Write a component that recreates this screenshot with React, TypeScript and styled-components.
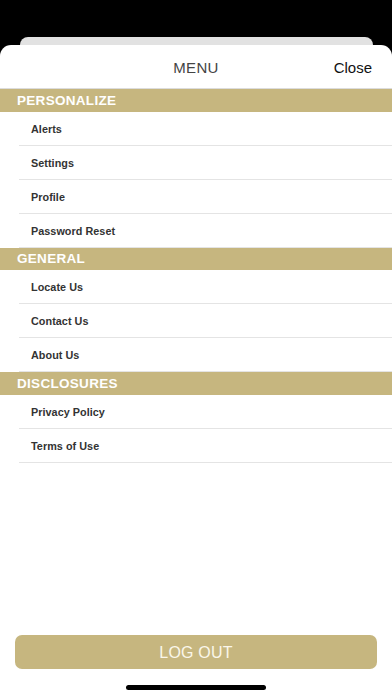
import React from "react";
import styled, { createGlobalStyle } from "styled-components";

const Global = createGlobalStyle`
  html, body { margin: 0; padding: 0; background: #000; }
  body { font-family: "Liberation Sans", Arial, sans-serif; }
  * { box-sizing: border-box; }
`;

const GOLD = "#c6b67f";

const Page = styled.div`
  width: 392px;
  height: 696px;
  background: #000;
  display: flex;
  flex-direction: column;
  padding-top: 37px;
  overflow: hidden;
`;

const BackCard = styled.div`
  height: 8px;
  margin: 0 19px 0 20px;
  background: #e2e2e2;
  border-radius: 9px 9px 0 0;
  flex-shrink: 0;
`;

const Sheet = styled.div`
  flex: 1;
  background: #fff;
  border-radius: 11px 11px 0 0;
  display: flex;
  flex-direction: column;
`;

const Header = styled.div`
  height: 44px;
  display: grid;
  grid-template-columns: 1fr auto 1fr;
  align-items: center;
  border-bottom: 1px solid #dcdcdc;
  padding: 1px 20px 0;
`;

const Title = styled.div`
  grid-column: 2;
  font-size: 15px;
  color: #444;
  letter-spacing: 0.3px;
`;

const CloseBtn = styled.div`
  grid-column: 3;
  justify-self: end;
  font-size: 15px;
  color: #111;
`;

const SectionBar = styled.div`
  height: 22.5px;
  background: ${GOLD};
  color: #fff;
  font-weight: 700;
  font-size: 13.5px;
  padding-left: 17px;
  display: flex;
  align-items: center;
  letter-spacing: 0.3px;
`;

const Row = styled.div`
  height: 34px;
  margin-left: 19px;
  border-bottom: 1px solid #e4e4e4;
  padding: 1px 0 0 12px;
  display: flex;
  align-items: center;
  font-size: 10.8px;
  font-weight: 700;
  color: #333;
  letter-spacing: 0.05px;
`;

const Spacer = styled.div`
  flex: 1;
`;

const LogoutButton = styled.div`
  margin: 0 15px;
  height: 34px;
  border-radius: 7px;
  background: ${GOLD};
  color: #faf6ea;
  font-size: 16px;
  padding-top: 1px;
  display: flex;
  align-items: center;
  justify-content: center;
  letter-spacing: 0.2px;
`;

const HomeBar = styled.div`
  align-self: center;
  width: 140px;
  height: 5px;
  border-radius: 3px;
  background: #000;
  margin: 16px 0 6px;
`;

const sections: { title: string; items: string[] }[] = [
  { title: "PERSONALIZE", items: ["Alerts", "Settings", "Profile", "Password Reset"] },
  { title: "GENERAL", items: ["Locate Us", "Contact Us", "About Us"] },
  { title: "DISCLOSURES", items: ["Privacy Policy", "Terms of Use"] },
];

export default function App() {
  return (
    <>
      <Global />
      <Page>
        <BackCard />
        <Sheet>
          <Header>
            <Title>MENU</Title>
            <CloseBtn>Close</CloseBtn>
          </Header>
          {sections.map((s) => (
            <React.Fragment key={s.title}>
              <SectionBar>{s.title}</SectionBar>
              {s.items.map((i) => (
                <Row key={i}>{i}</Row>
              ))}
            </React.Fragment>
          ))}
          <Spacer />
          <LogoutButton>LOG OUT</LogoutButton>
          <HomeBar />
        </Sheet>
      </Page>
    </>
  );
}
